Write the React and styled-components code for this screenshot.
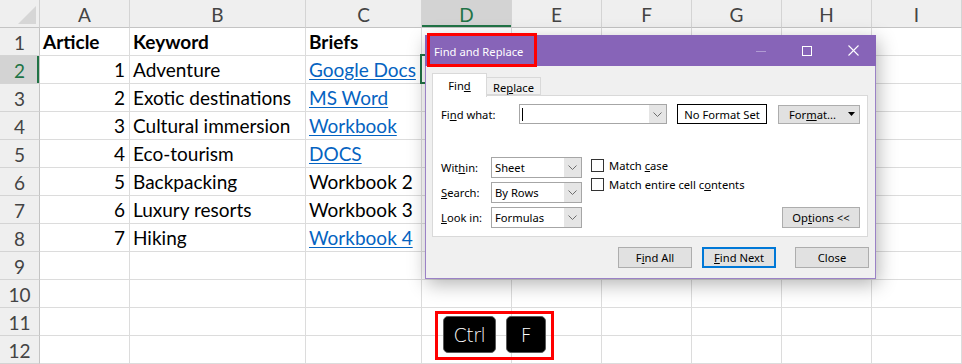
import React from 'react';
import styled, { createGlobalStyle } from 'styled-components';

const GlobalStyle = createGlobalStyle`
  html, body { margin: 0; padding: 0; background: #fff; overflow: hidden; }
  #root { width: 962px; height: 364px; position: relative; }
  * { box-sizing: border-box; }
`;

const GREEN = '#217346';
const GRID = '#dcdcdc';

const Sheet = styled.div`
  position: relative;
  width: 962px;
  height: 364px;
  display: grid;
  grid-template-columns: 40px 90px 176px 116px repeat(6, 90px);
  grid-template-rows: repeat(13, 28px);
  font-family: Lato, "Open Sans", sans-serif;
  overflow: hidden;
`;

const Corner = styled.div`
  position: relative;
  background: #efefef;
  border-right: 1px solid #d0d0d0;
  border-bottom: 1px solid #c4c4c4;
  &::after {
    content: '';
    position: absolute;
    right: 3px;
    bottom: 3px;
    width: 0;
    height: 0;
    border-left: 18px solid transparent;
    border-bottom: 18px solid #d6d6d6;
  }
`;

const ColHeader = styled.div`
  display: flex;
  align-items: center;
  justify-content: center;
  background: ${p => (p.$selected ? '#d3d3d3' : '#efefef')};
  color: ${p => (p.$selected ? GREEN : '#444')};
  border-right: 1px solid #d4d4d4;
  border-bottom: 1px solid #c4c4c4;
  box-shadow: ${p => (p.$selected ? `inset 0 -2px 0 ${GREEN}` : 'none')};
  font-size: 19px;
  padding-top: 1px;
`;

const RowHeader = styled.div`
  display: flex;
  align-items: center;
  justify-content: center;
  background: ${p => (p.$selected ? '#d3d3d3' : '#efefef')};
  color: ${p => (p.$selected ? GREEN : '#444')};
  border-right: 1px solid #c4c4c4;
  border-bottom: 1px solid #d4d4d4;
  box-shadow: ${p => (p.$selected ? `inset -2px 0 0 ${GREEN}` : 'none')};
  font-size: 19px;
  padding-top: 2px;
`;

const Cell = styled.div`
  position: relative;
  display: flex;
  align-items: flex-end;
  justify-content: ${p => (p.$right ? 'flex-end' : 'flex-start')};
  padding: 0 4px 2px 3px;
  border-right: 1px solid ${GRID};
  border-bottom: 1px solid ${GRID};
  font-size: 19px;
  line-height: 22px;
  font-weight: ${p => (p.$bold ? 700 : 400)};
  color: ${p => (p.$link ? '#0563c1' : '#000')};
  text-decoration: ${p => (p.$link ? 'underline' : 'none')};
  text-underline-offset: 2px;
  white-space: nowrap;
  ${p => p.$active && `
    &::after {
      content: '';
      position: absolute;
      left: -2px;
      top: -2px;
      right: -1px;
      bottom: -1px;
      border: 2px solid ${GREEN};
      z-index: 2;
    }
  `}
`;

/* ---------- dialog ---------- */

const Dialog = styled.div`
  position: absolute;
  left: 425px;
  top: 35px;
  width: 451px;
  height: 244px;
  border: 1px solid #9b82c6;
  border-top: none;
  background: #f0f0f0;
  box-shadow: 2px 5px 18px rgba(0, 0, 0, 0.3);
  z-index: 10;
  display: flex;
  flex-direction: column;
  font-family: "Segoe UI", "Noto Sans", sans-serif;
  font-size: 11.2px;
  color: #000;
`;

const TitleBar = styled.div`
  height: 31px;
  margin: 0 -1px;
  background: #8764b8;
  display: flex;
  align-items: center;
  color: #fff;
  font-size: 11.2px;
  padding-left: 9px;
`;

const TitleText = styled.div`
  flex: 1;
  padding-top: 1px;
`;

const WinButton = styled.div`
  width: 46px;
  height: 31px;
  display: flex;
  align-items: center;
  justify-content: center;
`;

const Highlight = styled.div`
  position: absolute;
  left: 1px;
  top: -2px;
  width: 110px;
  height: 34px;
  border: 3px solid #ff0000;
  pointer-events: none;
`;

const Body = styled.div`
  flex: 1;
  display: flex;
  flex-direction: column;
  padding: 7px 6px 9px 6px;
`;

const Tabs = styled.div`
  display: flex;
  align-items: flex-end;
  height: 22px;
  position: relative;
  z-index: 1;
`;

const Tab = styled.div`
  display: flex;
  align-items: center;
  justify-content: center;
  height: ${p => (p.$active ? '24px' : '18px')};
  width: ${p => (p.$active ? '55px' : '54px')};
  margin-bottom: ${p => (p.$active ? '-2px' : '0')};
  background: ${p => (p.$active ? '#fff' : '#f0f0f0')};
  border: 1px solid #d9d9d9;
  border-bottom: ${p => (p.$active ? 'none' : '1px solid #d9d9d9')};
  border-left: ${p => (p.$active ? '1px solid #d9d9d9' : 'none')};
  padding-top: ${p => (p.$active ? '0' : '2px')};
`;

const Panel = styled.div`
  margin-right: 1px;
  background: #fff;
  border: 1px solid #d9d9d9;
  padding: 8px 7px 8px 8px;
  display: flex;
  flex-direction: column;
`;

const FindRow = styled.div`
  display: flex;
  align-items: center;
  height: 20px;
`;

const Label = styled.div`
  width: ${p => p.$w}px;
  flex-shrink: 0;
  white-space: nowrap;
`;

const Key = styled.span`
  text-decoration: underline;
  text-underline-offset: 1px;
`;

const Combo = styled.div`
  width: ${p => p.$w}px;
  height: ${p => p.$h}px;
  border: 1px solid #a6a6a6;
  background: #fff;
  display: flex;
  align-items: stretch;
  flex-shrink: 0;
`;

const ComboText = styled.div`
  flex: 1;
  display: flex;
  align-items: center;
  padding-left: ${p => (p.$caret ? '2px' : '3px')};
`;

const Caret = styled.div`
  width: 1px;
  height: 13px;
  background: #000;
`;

const ComboArrow = styled.div`
  width: 17px;
  background: #e5e5e5;
  display: flex;
  align-items: center;
  justify-content: center;
`;

const FormatBox = styled.div`
  width: 90px;
  height: 20px;
  margin-left: 10px;
  border: 1px solid #000;
  display: flex;
  align-items: center;
  justify-content: center;
  white-space: nowrap;
`;

const Button = styled.div`
  width: ${p => p.$w}px;
  height: ${p => p.$h || 21}px;
  margin-left: ${p => (p.$auto ? 'auto' : `${p.$ml || 0}px`)};
  background: #e1e1e1;
  border: ${p => (p.$default ? '2px solid #0078d7' : '1px solid #adadad')};
  display: flex;
  align-items: center;
  justify-content: center;
  flex-shrink: 0;
  white-space: nowrap;
`;

const DropTri = styled.svg`
  margin-left: 12px;
  margin-right: -6px;
`;

const Lower = styled.div`
  display: flex;
  align-items: flex-end;
  margin-top: 33px;
`;

const FieldCol = styled.div`
  display: flex;
  flex-direction: column;
  gap: 4px;
`;

const FieldRow = styled.div`
  display: flex;
  align-items: center;
`;

const CheckCol = styled.div`
  align-self: flex-start;
  display: flex;
  flex-direction: column;
  gap: 6px;
  margin-left: 9px;
  margin-top: 2px;
`;

const CheckRow = styled.div`
  display: flex;
  align-items: center;
  height: 13px;
  white-space: nowrap;
`;

const Box = styled.div`
  width: 13px;
  height: 13px;
  margin-right: 5px;
  border: 1px solid #333;
  background: #fff;
`;

const Footer = styled.div`
  display: flex;
  justify-content: flex-end;
  margin-top: 10px;
`;

/* ---------- keys ---------- */

const KeysFrame = styled.div`
  position: absolute;
  left: 435px;
  top: 311px;
  width: 119px;
  height: 49px;
  border: 3px solid #ff0000;
  padding: 2px 5px;
  display: flex;
  gap: 10px;
  z-index: 5;
`;

const KeyCap = styled.div`
  width: ${p => p.$w}px;
  height: 37px;
  background: #000;
  border: 1px solid #5a5a5a;
  border-radius: 5px;
  color: #fff;
  font-family: "DejaVu Sans", "Liberation Sans", sans-serif;
  font-weight: 200;
  font-size: 19px;
  display: flex;
  align-items: center;
  justify-content: center;
  letter-spacing: -0.5px;
`;

const Chevron = () => (
  <svg width="9" height="5" viewBox="0 0 9 5">
    <polyline points="0.5,0.5 4.5,4.5 8.5,0.5" fill="none" stroke="#6d6d6d" strokeWidth="1" />
  </svg>
);

const Select = ({ value, w = 91, h = 21 }) => (
  <Combo $w={w} $h={h}>
    <ComboText>{value}</ComboText>
    <ComboArrow><Chevron /></ComboArrow>
  </Combo>
);

const COL_LETTERS = ['A', 'B', 'C', 'D', 'E', 'F', 'G', 'H', 'I'];

const DATA = [
  [{ t: 'Article', b: true }, { t: 'Keyword', b: true }, { t: 'Briefs', b: true }],
  [{ t: '1', r: true }, { t: 'Adventure' }, { t: 'Google Docs', l: true }],
  [{ t: '2', r: true }, { t: 'Exotic destinations' }, { t: 'MS Word', l: true }],
  [{ t: '3', r: true }, { t: 'Cultural immersion' }, { t: 'Workbook', l: true }],
  [{ t: '4', r: true }, { t: 'Eco-tourism' }, { t: 'DOCS', l: true }],
  [{ t: '5', r: true }, { t: 'Backpacking' }, { t: 'Workbook 2' }],
  [{ t: '6', r: true }, { t: 'Luxury resorts' }, { t: 'Workbook 3' }],
  [{ t: '7', r: true }, { t: 'Hiking' }, { t: 'Workbook 4', l: true }],
];

export default function App() {
  const rows = [];
  for (let r = 1; r <= 12; r++) {
    const data = DATA[r - 1] || [];
    rows.push(
      <RowHeader key={`rh${r}`} $selected={r === 2}>{r}</RowHeader>
    );
    COL_LETTERS.forEach((c, ci) => {
      const d = data[ci];
      rows.push(
        <Cell
          key={`${c}${r}`}
          $right={d && d.r}
          $bold={d && d.b}
          $link={d && d.l}
          $active={c === 'D' && r === 2}
        >
          {d ? d.t : ''}
        </Cell>
      );
    });
  }

  return (
    <>
      <GlobalStyle />
      <Sheet>
        <Corner />
        {COL_LETTERS.map(c => (
          <ColHeader key={c} $selected={c === 'D'}>{c}</ColHeader>
        ))}
        {rows}

        <Dialog>
          <TitleBar>
            <TitleText>Find and Replace</TitleText>
            <WinButton>
              <svg width="10" height="10" viewBox="0 0 10 10">
                <line x1="0" y1="5.5" x2="10" y2="5.5" stroke="#b09bd3" strokeWidth="1" />
              </svg>
            </WinButton>
            <WinButton>
              <svg width="10" height="10" viewBox="0 0 10 10">
                <rect x="0.5" y="0.5" width="9" height="9" fill="none" stroke="#fff" strokeWidth="1" />
              </svg>
            </WinButton>
            <WinButton>
              <svg width="11" height="11" viewBox="0 0 11 11">
                <line x1="0.5" y1="0.5" x2="10.5" y2="10.5" stroke="#fff" strokeWidth="1.1" />
                <line x1="10.5" y1="0.5" x2="0.5" y2="10.5" stroke="#fff" strokeWidth="1.1" />
              </svg>
            </WinButton>
          </TitleBar>
          <Highlight />
          <Body>
            <Tabs>
              <Tab $active><span>Fin<Key>d</Key></span></Tab>
              <Tab><span>Re<Key>p</Key>lace</span></Tab>
            </Tabs>
            <Panel>
              <FindRow>
                <Label $w={78}>Fi<Key>n</Key>d what:</Label>
                <Combo $w={148} $h={20}>
                  <ComboText $caret><Caret /></ComboText>
                  <ComboArrow><Chevron /></ComboArrow>
                </Combo>
                <FormatBox>No Format Set</FormatBox>
                <Button $w={82} $h={19} $ml={11}>
                  <span>For<Key>m</Key>at...</span>
                  <DropTri width="7" height="4" viewBox="0 0 7 4">
                    <polygon points="0,0 7,0 3.5,4" fill="#000" />
                  </DropTri>
                </Button>
              </FindRow>
              <Lower>
                <FieldCol>
                  <FieldRow>
                    <Label $w={50}>Wit<Key>h</Key>in:</Label>
                    <Select value="Sheet" />
                  </FieldRow>
                  <FieldRow>
                    <Label $w={50}><Key>S</Key>earch:</Label>
                    <Select value="By Rows" />
                  </FieldRow>
                  <FieldRow>
                    <Label $w={50}><Key>L</Key>ook in:</Label>
                    <Select value="Formulas" />
                  </FieldRow>
                </FieldCol>
                <CheckCol>
                  <CheckRow><Box /><span>Match <Key>c</Key>ase</span></CheckRow>
                  <CheckRow><Box /><span>Match entire cell c<Key>o</Key>ntents</span></CheckRow>
                </CheckCol>
                <Button $w={78} $auto>
                  <span>Op<Key>t</Key>ions &lt;&lt;</span>
                </Button>
              </Lower>
            </Panel>
            <Footer>
              <Button $w={74}><span>F<Key>i</Key>nd All</span></Button>
              <Button $w={74} $ml={10} $default><span><Key>F</Key>ind Next</span></Button>
              <Button $w={74} $ml={19}>Close</Button>
            </Footer>
          </Body>
        </Dialog>

        <KeysFrame>
          <KeyCap $w={53}>Ctrl</KeyCap>
          <KeyCap $w={40}>F</KeyCap>
        </KeysFrame>
      </Sheet>
    </>
  );
}
